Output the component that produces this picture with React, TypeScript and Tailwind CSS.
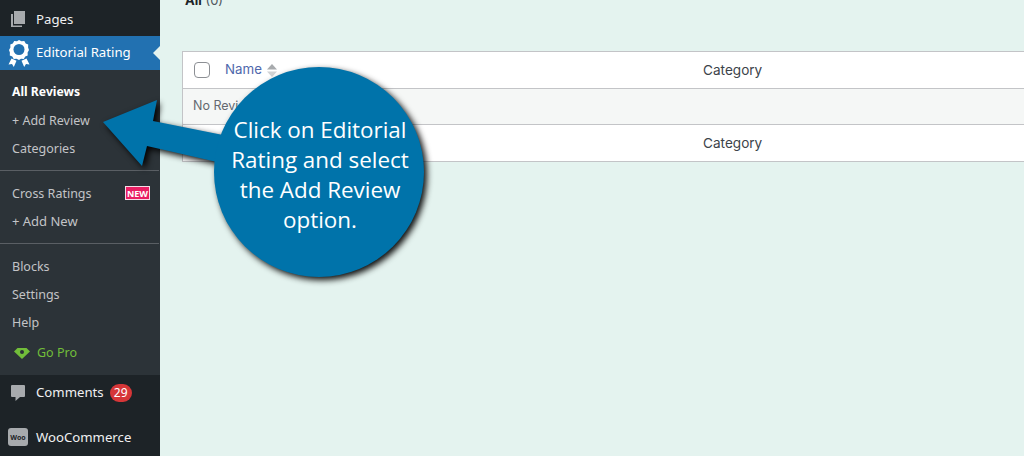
const subItem = "flex h-7 items-center pl-3 pt-[2px] text-[12.5px] text-[#c3c4c7]";

const Divider = () => <div className="my-[8px] h-px w-[159px] bg-[#5a5f64]" />;

const PagesIcon = () => (
  <svg width="20" height="20" viewBox="0 0 20 20" fill="#a7aaad">
    <path d="M6 3h11v13H6z" />
    <path d="M3 6h2v11.500h9V19H3z" />
  </svg>
);

const RibbonIcon = () => (
  <svg width="22" height="27" viewBox="0 0 22 27" fill="#fff">
    <path d="M11 0l2.500 1.300 2.800-.3 1.400 2.400 2.500 1.200-.1 2.800L21 10l-1.400 2.600.1 2.800-2.500 1.200-1.400 2.400-2.800-.3L11 20l-2.500-1.300-2.800.3-1.400-2.400-2.500-1.200.1-2.800L1 10l1.400-2.600-.1-2.800 2.500-1.200L6.200 1l2.800.3z" />
    <circle cx="11" cy="9.500" r="5.500" fill="#2271b1" />
    <path d="M3.500 18.500L0.500 24.500l3.500-.5 1.800 3 2.700-6.200zM18.500 18.500l3 6-3.500-.5-1.800 3-2.700-6.200z" />
  </svg>
);

const CommentIcon = () => (
  <svg width="14" height="16" viewBox="0 0 14 16" fill="#a7aaad">
    <path d="M1 0h12a1 1 0 0 1 1 1v10a1 1 0 0 1-1 1H9l-4.500 4v-4H1a1 1 0 0 1-1-1V1a1 1 0 0 1 1-1z" />
  </svg>
);

const GemIcon = () => (
  <svg width="16" height="11" viewBox="0 0 16 11" fill="#72be3a">
    <path d="M3.500 0h9L16 3.500 8 11 0 3.500z" />
    <circle cx="8" cy="4" r="2" fill="#2c3338" />
  </svg>
);

export default function App() {
  return (
    <div className="flex h-[456px] w-[1024px] overflow-hidden bg-[#e4f3ef] font-['Noto_Sans',sans-serif]">
      <aside className="flex h-full w-40 shrink-0 flex-col bg-[#1d2327] text-[13.2px]">
        <div className="flex h-9 items-center gap-[8px] pl-[8px] text-[#f0f0f1]">
          <PagesIcon />
          <span className="pt-[3px]">Pages</span>
        </div>
        <div className="relative flex h-[34px] items-center gap-[6px] bg-[#2271b1] pl-[8px] text-white">
          <RibbonIcon />
          <span>Editorial Rating</span>
          <div className="absolute right-0 top-[10px] size-0 border-y-[7px] border-r-[7px] border-y-transparent border-r-[#e4f3ef]" />
        </div>
        <div className="flex h-[305px] flex-col bg-[#2c3338] pt-[8px]">
          <div className="flex h-7 items-center pl-3 text-[12.2px] font-bold text-white">All Reviews</div>
          <div className={subItem}>+ Add Review</div>
          <div className={subItem}>Categories</div>
          <Divider />
          <div className={`${subItem} relative text-[12.2px]`}>
            Cross Ratings
            <span className="absolute left-[125px] top-[7px] flex h-[14px] w-[25px] items-center justify-center border border-[#f5dbe6] bg-[#e91e63] text-[9px] leading-none font-bold text-white">
              NEW
            </span>
          </div>
          <div className={`${subItem} text-[13px]`}>+ Add New</div>
          <Divider />
          <div className={subItem}>Blocks</div>
          <div className={subItem}>Settings</div>
          <div className={subItem}>Help</div>
          <div className="flex h-8 items-center gap-[7px] pl-[14px] pt-[2px] text-[12.5px] text-[#72be3a]">
            <GemIcon />
            <span>Go Pro</span>
          </div>
        </div>
        <div className="flex h-[35px] items-center pl-[11px] text-[#f0f0f1]">
          <CommentIcon />
          <span className="ml-[11px]">Comments</span>
          <span className="ml-[6px] flex h-[18px] w-[22px] items-center justify-center rounded-full bg-[#d63638] text-[12px] text-white">
            29
          </span>
        </div>
        <div className="mt-[9px] flex h-9 items-center pl-[8px] text-[#f0f0f1]">
          <div className="flex h-[18px] w-[20px] items-center justify-center rounded-[3px] bg-[#a7aaad] text-[7px] leading-none font-bold text-[#1d2327]">
            Woo
          </div>
          <span className="ml-[8px] pt-[2px]">WooCommerce</span>
        </div>
      </aside>

      <main className="relative min-w-0 flex-1 pl-[22px] font-['Inter',sans-serif] text-[13px]">
        <div className="mt-[-9px] h-[60px] pl-[3px] text-[13px] text-[#50575e]">
          <span className="font-bold text-[#1d2327]">All</span> (0)
        </div>
        <div className="w-[900px] border border-[#c3c4c7] bg-white text-[#3c434a]">
          <div className="flex h-[37px] items-center border-b border-[#c3c4c7]">
            <div className="ml-[11px] size-4 rounded-[4px] border border-[#8c8f94] bg-white" />
            <span className="ml-[15px] text-[13.3px] text-[#4f68ac]">Name</span>
            <svg className="ml-[5px] mt-[1px]" width="10" height="13" viewBox="0 0 10 13" fill="#a7aaad">
              <path d="M5 0l5 5.500H0z" />
              <path d="M0 7.500h10L5 13z" fill="#d0d2d4" />
            </svg>
            <span className="absolute left-[543px] text-[13.6px]">Category</span>
          </div>
          <div className="flex h-[35px] items-center bg-[#f5f7f6] pl-[10px] text-[12.5px] text-[#646970]">No Reviews found.</div>
          <div className="flex h-[37px] items-center border-t border-[#c3c4c7]">
            <span className="absolute left-[543px] text-[13.6px]">Category</span>
          </div>
        </div>
      </main>

      {/* callout laid over the page */}
      <div className="absolute left-[100px] top-[64px] h-[220px] w-[330px] overflow-visible">
        <svg className="absolute inset-0 drop-shadow-[3px_3px_3px_rgba(0,0,0,0.95)]" width="330" height="220" viewBox="100 64 330 220">
          <path d="M103 122L157 100L153 121L223 135L217 162L147 146L142 166Z" fill="#0073aa" />
          <circle cx="319" cy="172" r="105" fill="#0073aa" />
        </svg>
        <div className="absolute left-[115px] top-[51px] w-[210px] text-center font-['Open_Sans',sans-serif] text-[22.4px] leading-[30px] text-white">
          Click on Editorial
          <br />
          Rating and select
          <br />
          the Add Review
          <br />
          option.
        </div>
      </div>
    </div>
  );
}
